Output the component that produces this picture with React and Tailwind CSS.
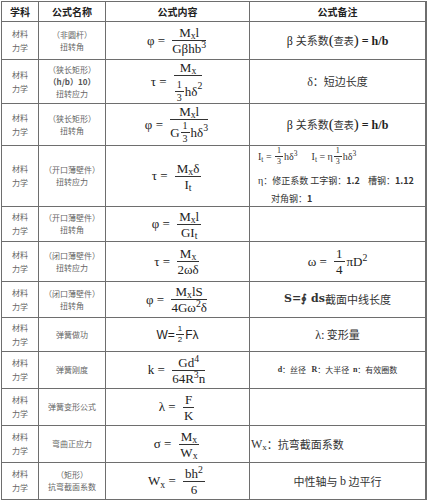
import React from "react";

const serif = "font-['Liberation_Serif','Noto_Sans_CJK_SC',serif]";
const cjk = "font-['Noto_Sans_CJK_SC',sans-serif]";

const Frac = ({ n, d, nClass = "", dClass = "", small = false, mid = false }) => (
  <span
    className={
      "inline-flex flex-col items-center align-middle " +
      (small ? "mx-[1px] text-[8px]" : mid ? "mx-[1px] text-[10px]" : "mx-[2px]")
    }
  >
    <span className={"px-[2px] leading-none pb-[1px] " + nClass}>{n}</span>
    <span
      className={
        "w-full border-t border-[#333] text-center leading-none pt-[1px] " +
        dClass
      }
    >
      {d}
    </span>
  </span>
);

const Mx = () => (
  <>
    M<sub>x</sub>
  </>
);

const Formula = ({ children, className = "" }) => (
  <div
    className={
      "flex h-full items-center justify-center text-[13px] text-[#222] " +
      serif +
      " " +
      className
    }
  >
    {children}
  </div>
);

const Eq = ({ left }) => (
  <span className="mr-[2px] whitespace-pre">{left} = </span>
);

function BetaNote() {
  return (
    <div className={"flex h-full items-center justify-center whitespace-pre text-[12px] text-[#222] " + serif}>
      <span>β </span>
      <span className={cjk + " text-[11px] text-[#333]"}>关系数</span>
      <span className="text-[15px] leading-none">(</span>
      <span className={cjk + " text-[10px] text-[#333]"}>查表</span>
      <span className="text-[15px] leading-none">)</span>
      <span className="font-bold"> = h/b</span>
    </div>
  );
}

const rows = [
  {
    name: ["（非圆杆）", "扭转角"],
    formula: (
      <Formula>
        <Eq left="φ" />
        <Frac n={<><Mx />l</>} d={<>Gβhb<sup>3</sup></>} />
      </Formula>
    ),
    note: <BetaNote />,
  },
  {
    name: ["（狭长矩形）", "（h/b）10）", "扭转应力"],
    bold: 1,
    formula: (
      <Formula>
        <Eq left="τ" />
        <Frac
          n={<Mx />}
          d={
            <span className="inline-flex items-center">
              <Frac mid n="1" d="3" />
              hδ<sup>2</sup>
            </span>
          }
        />
      </Formula>
    ),
    note: (
      <div className={"flex h-full items-center justify-center text-[11px] text-[#333] " + cjk}>
        <span className={serif + " text-[12px]"}>δ</span>：短边长度
      </div>
    ),
  },
  {
    name: ["（狭长矩形）", "扭转角"],
    formula: (
      <Formula>
        <Eq left="φ" />
        <Frac
          n={<><Mx />l</>}
          d={
            <span className="inline-flex items-center">
              G
              <Frac mid n="1" d="3" />
              hδ<sup>3</sup>
            </span>
          }
        />
      </Formula>
    ),
    note: <BetaNote />,
  },
  {
    name: ["（开口薄壁件）", "扭转应力"],
    formula: (
      <Formula>
        <Eq left="τ" />
        <Frac n={<><Mx />δ</>} d={<>I<sub>t</sub></>} />
      </Formula>
    ),
    note: (
      <div className={"flex h-full flex-col justify-center pl-[8px] text-[9px] text-[#333] " + cjk}>
        <div className={"flex items-center whitespace-pre " + serif + " text-[10px]"}>
          <span>
            I<sub>t</sub> ={" "}
          </span>
          <Frac small n="1" d="3" />
          <span>
            hδ<sup>3</sup>
          </span>
          <span className="ml-[14px]">
            I<sub>t</sub> = η
          </span>
          <Frac small n="1" d="3" />
          <span>
            hδ<sup>3</sup>
          </span>
        </div>
        <div className="mt-[7px] whitespace-pre">
          <span className={serif + " text-[10px]"}>η</span>：修正系数 工字钢：<b>1.2</b>    槽钢：<b>1.12</b>
        </div>
        <div className="mt-[4px] pl-[13px]">
          对角钢：<b>1</b>
        </div>
      </div>
    ),
  },
  {
    name: ["（开口薄壁件）", "扭转角"],
    formula: (
      <Formula>
        <Eq left="φ" />
        <Frac n={<><Mx />l</>} d={<>GI<sub>t</sub></>} />
      </Formula>
    ),
    note: null,
  },
  {
    name: ["（闭口薄壁件）", "扭转应力"],
    formula: (
      <Formula>
        <Eq left="τ" />
        <Frac n={<Mx />} d="2ωδ" />
      </Formula>
    ),
    note: (
      <Formula className="text-[12px]">
        <Eq left="ω" />
        <Frac n="1" d="4" />
        <span>
          πD<sup>2</sup>
        </span>
      </Formula>
    ),
  },
  {
    name: ["（闭口薄壁件）", "扭转角"],
    formula: (
      <Formula>
        <Eq left="φ" />
        <Frac n={<><Mx />lS</>} d={<>4Gω<sup>2</sup>δ</>} />
      </Formula>
    ),
    note: (
      <div className={"flex h-full items-center justify-center text-[11px] text-[#333] " + cjk}>
        <span className={"font-['DejaVu_Serif',serif] text-[11px] font-bold"}>S=∮ ds</span>截面中线长度
      </div>
    ),
  },
  {
    name: ["弹簧做功"],
    formula: (
      <div className="flex h-full items-center justify-center font-['Liberation_Sans',sans-serif] text-[12px] text-[#222]">
        W=
        <Frac small n="1" d="2" />
        Fλ
      </div>
    ),
    note: (
      <div className={"flex h-full items-center justify-center whitespace-pre text-[11px] text-[#333] " + cjk}>
        <span className={serif + " text-[12px]"}>λ</span>: 变形量
      </div>
    ),
  },
  {
    name: ["弹簧刚度"],
    formula: (
      <Formula>
        <Eq left="k" />
        <Frac n={<>Gd<sup>4</sup></>} d={<>64R<sup>3</sup>n</>} />
      </Formula>
    ),
    note: (
      <div className={"flex h-full items-center justify-center whitespace-pre text-[8px] text-[#333] " + cjk}>
        <b className={serif}>d</b>：丝径   <b className={serif}>R</b>：大半径  <b className={serif}>n</b>：有效圈数
      </div>
    ),
  },
  {
    name: ["弹簧变形公式"],
    formula: (
      <Formula>
        <Eq left="λ" />
        <Frac n="F" d="K" />
      </Formula>
    ),
    note: null,
  },
  {
    name: ["弯曲正应力"],
    formula: (
      <Formula>
        <Eq left="σ" />
        <Frac n={<Mx />} d={<>W<sub>x</sub></>} />
      </Formula>
    ),
    note: (
      <div className={"flex h-full items-center pl-[1px] text-[11px] text-[#333] " + cjk}>
        <span className={serif + " text-[12px]"}>
          W<sub>x</sub>
        </span>
        ：抗弯截面系数
      </div>
    ),
  },
  {
    name: ["（矩形）", "抗弯截面系数"],
    formula: (
      <Formula>
        <Eq left={<>W<sub>x</sub></>} />
        <Frac n={<>bh<sup>2</sup></>} d="6" />
      </Formula>
    ),
    note: (
      <div className={"flex h-full items-center justify-center whitespace-pre text-[11px] text-[#333] " + cjk}>
        中性轴与 <span className={serif + " text-[12px]"}>b</span> 边平行
      </div>
    ),
  },
];

const headers = ["学科", "公式名称", "公式内容", "公式备注"];

export default function App() {
  return (
    <div className="h-[500px] w-[427px] overflow-hidden bg-white">
      <div className="ml-px mt-px grid w-[426px] grid-cols-[36px_66px_143px_175px] grid-rows-[19px_37px_43px_41px_60px_34px_39px_35px_33px_36px_36px_36px_36px] gap-px bg-[#6e6e6e] p-px">
        {headers.map((h) => (
          <div
            key={h}
            className={"flex items-center justify-center bg-white text-[10px] font-bold text-[#222] " + cjk}
          >
            {h}
          </div>
        ))}
        {rows.map((r, i) => (
          <React.Fragment key={i}>
            <div
              className={"flex flex-col items-center justify-center bg-white text-[8px] leading-[14px] text-[#666] " + cjk}
            >
              <span>材料</span>
              <span>力学</span>
            </div>
            <div
              className={"flex flex-col items-center justify-center bg-white text-[8px] leading-[12px] text-[#666] " + cjk}
            >
              {r.name.map((t, j) => (
                <span key={j} className={r.bold === j ? "font-bold text-[#555]" : ""}>
                  {t}
                </span>
              ))}
            </div>
            <div className="overflow-hidden bg-white">{r.formula}</div>
            <div className="overflow-hidden bg-white">{r.note}</div>
          </React.Fragment>
        ))}
      </div>
    </div>
  );
}
